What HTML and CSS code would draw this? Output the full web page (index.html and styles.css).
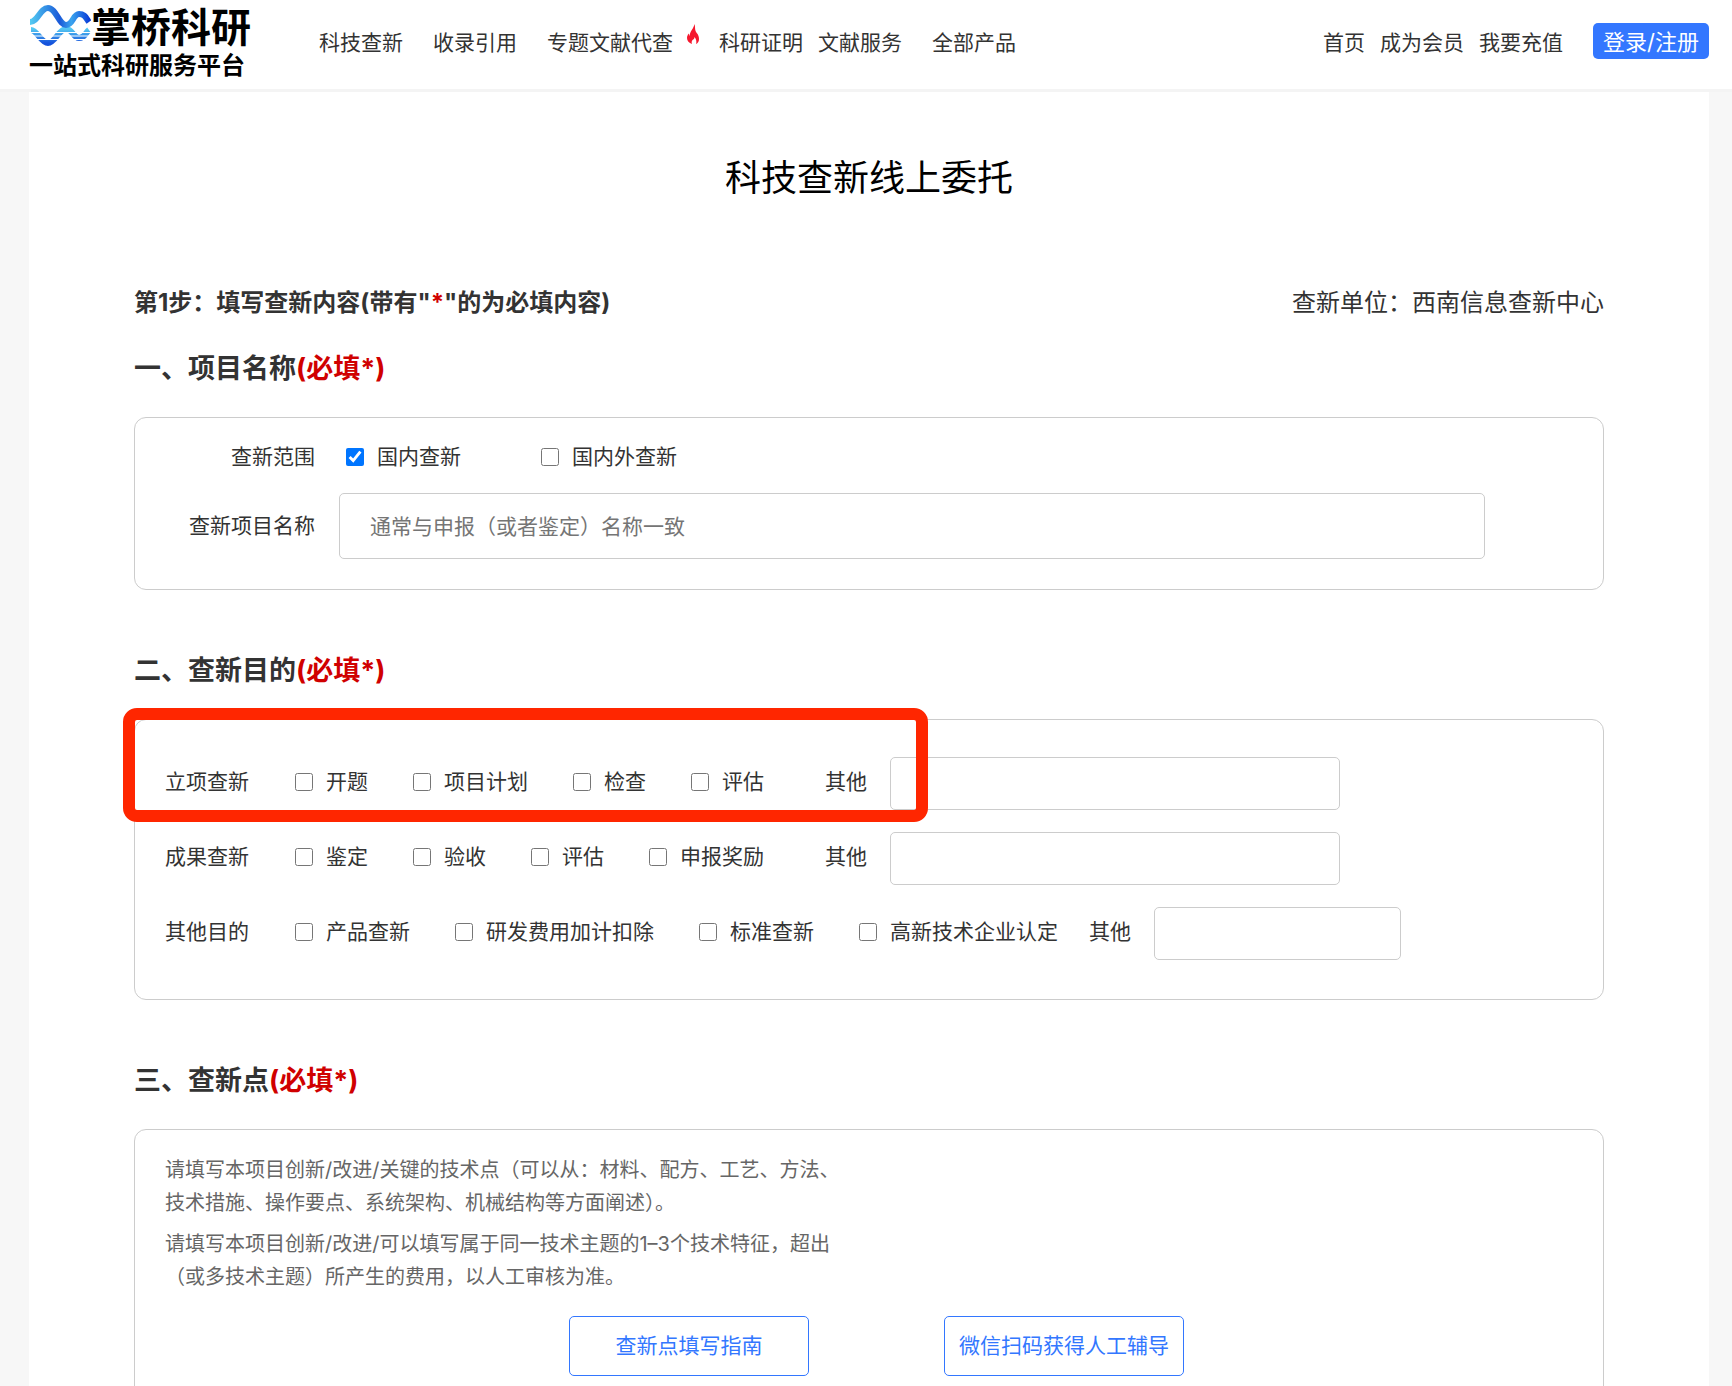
FILE: index.html
```html
<!DOCTYPE html>
<html lang="zh-CN">
<head>
<meta charset="utf-8">
<meta name="viewport" content="width=device-width, initial-scale=1">
<title>科技查新线上委托</title>
<link rel="stylesheet" href="styles.css">
</head>
<body>
<header class="header">
  <a class="logo" href="#">
    <span class="logo-top">
      <svg class="logo-mark" viewBox="0 0 62 46" aria-hidden="true">
        <defs>
          <linearGradient id="wave-a" x1="0" y1="0" x2="1" y2="0">
            <stop offset="0" stop-color="#55ccf2"/><stop offset=".35" stop-color="#2a7de0"/><stop offset=".5" stop-color="#1a58d8"/><stop offset=".7" stop-color="#3aa4ee"/><stop offset="1" stop-color="#0a3fd8"/>
          </linearGradient>
          <linearGradient id="wave-b" x1="0" y1="0" x2="0" y2="1">
            <stop offset="0" stop-color="#55c8f2"/><stop offset="1" stop-color="#1552dc"/>
          </linearGradient>
        </defs>
        <path d="M2 26C8 26 12 39 19 39S30 25 37 25S44 34 50 34S56 29 60 26" fill="none" stroke="url(#wave-b)" stroke-width="6"/>
        <path d="M0 28.500H62M0 32H62M0 35.500H62" stroke="#fff" stroke-width="1.200"/>
        <path d="M1 18C9 18 11 4 19 4S30 21 37 21S44 10 50 10S57 14 60 18" fill="none" stroke="url(#wave-a)" stroke-width="6"/>
      </svg>
      <span class="logo-name">掌桥科研</span>
    </span>
    <span class="logo-tagline">一站式科研服务平台</span>
  </a>
  <nav class="nav" aria-label="主导航">
    <a href="#">科技查新</a>
    <a href="#">收录引用</a>
    <a class="hot" href="#">专题文献代查
      <svg class="flame" viewBox="0 0 12 20" aria-hidden="true"><path d="M7.500 0C8.500 3 7.500 5 9 8C10 9.500 12 11 12 15C12 17.500 11 19 9 20C10 17.500 9 15 7.500 13C7.500 15 6.500 15 5.500 16C4.500 17 4.500 19 5 20C2 19 0 17 0 14C0 12 1 10.500 1.500 9.500L2.500 12C3 7 6.500 5 7.500 0Z" fill="#f5172d"/></svg>
    </a>
    <a class="tight" href="#">科研证明</a>
    <a href="#">文献服务</a>
    <a href="#">全部产品</a>
  </nav>
  <div class="account">
    <a href="#">首页</a>
    <a href="#">成为会员</a>
    <a href="#">我要充值</a>
    <button class="login" type="button">登录/注册</button>
  </div>
</header>

<main class="page">
  <h1 class="title">科技查新线上委托</h1>
  <form>
    <div class="step">
      <strong>第1步：填写查新内容(带有"<span class="required">*</span>"的为必填内容)</strong>
      <span>查新单位：西南信息查新中心</span>
    </div>

    <section class="section">
      <h2 class="heading">一、项目名称<span class="required">(必填*)</span></h2>
      <div class="card card-name">
        <div class="field">
          <span class="field-label">查新范围</span>
          <div class="scope">
            <label class="option"><input type="checkbox" checked>国内查新</label>
            <label class="option"><input type="checkbox">国内外查新</label>
          </div>
        </div>
        <div class="field">
          <label class="field-label" for="project">查新项目名称</label>
          <input class="text-input project" id="project" type="text" placeholder="通常与申报（或者鉴定）名称一致">
        </div>
      </div>
    </section>

    <section class="section">
      <h2 class="heading">二、查新目的<span class="required">(必填*)</span></h2>
      <div class="card card-purpose">
        <div class="highlight"></div>
        <div class="row">
          <span class="row-label">立项查新</span>
          <div class="options">
            <label class="option"><input type="checkbox">开题</label>
            <label class="option"><input type="checkbox">项目计划</label>
            <label class="option"><input type="checkbox">检查</label>
            <label class="option"><input type="checkbox">评估</label>
          </div>
          <label class="other"><span class="other-label">其他</span><input class="text-input" type="text"></label>
        </div>
        <div class="row">
          <span class="row-label">成果查新</span>
          <div class="options">
            <label class="option"><input type="checkbox">鉴定</label>
            <label class="option"><input type="checkbox">验收</label>
            <label class="option"><input type="checkbox">评估</label>
            <label class="option"><input type="checkbox">申报奖励</label>
          </div>
          <label class="other"><span class="other-label">其他</span><input class="text-input" type="text"></label>
        </div>
        <div class="row">
          <span class="row-label">其他目的</span>
          <div class="options">
            <label class="option"><input type="checkbox">产品查新</label>
            <label class="option"><input type="checkbox">研发费用加计扣除</label>
            <label class="option"><input type="checkbox">标准查新</label>
            <label class="option"><input type="checkbox">高新技术企业认定</label>
          </div>
          <label class="other other-short"><span class="other-label">其他</span><input class="text-input" type="text"></label>
        </div>
      </div>
    </section>

    <section class="section">
      <h2 class="heading">三、查新点<span class="required">(必填*)</span></h2>
      <div class="card card-points">
        <p class="hint">请填写本项目创新/改进/关键的技术点（可以从：材料、配方、工艺、方法、<br>技术措施、操作要点、系统架构、机械结构等方面阐述）。</p>
        <p class="hint">请填写本项目创新/改进/可以填写属于同一技术主题的1–3个技术特征，超出<br>（或多技术主题）所产生的费用，以人工审核为准。</p>
        <div class="actions">
          <button class="outline" type="button">查新点填写指南</button>
          <button class="outline" type="button">微信扫码获得人工辅导</button>
        </div>
      </div>
    </section>
  </form>
</main>
</body>
</html>
```

FILE: styles.css
```css
* {
  box-sizing: border-box;
}

body {
  margin: 0;
  background: #f7f7f7;
  color: #333;
  font: 21px/30px Inter, "Noto Sans CJK SC", sans-serif;
}

input,
button {
  font: inherit;
}

a {
  color: inherit;
  text-decoration: none;
}

.header {
  display: flex;
  align-items: flex-start;
  height: 92px;
  padding: 0 23px 0 29px;
  background: #fff;
  border-bottom: 3px solid #f4f4f4;
  white-space: nowrap;
}

.logo {
  display: flex;
  flex-direction: column;
  padding-top: 3px;
  color: #000;
  font-weight: 700;
}

.logo-top {
  display: flex;
  height: 48px;
}

.logo-mark {
  width: 62px;
  height: 46px;
  margin-top: 1px;
}

.logo-name {
  font-size: 40px;
  line-height: 50px;
}

.logo-tagline {
  font-size: 24px;
  line-height: 30px;
}

.nav {
  display: flex;
  gap: 30px;
  margin: 28px 0 0 68px;
}

.nav .hot {
  display: flex;
  gap: 14px;
}

.flame {
  width: 12px;
  height: 20px;
  margin-top: -4px;
}

.nav .tight {
  margin: 0 -15px 0 -10px;
}

.account {
  display: flex;
  gap: 15px;
  margin: 28px 0 0 auto;
}

.login {
  height: 36px;
  margin: -5px 0 0 15px;
  padding: 1px 10px 0;
  border: 0;
  border-radius: 5px;
  background: #37f;
  color: #fff;
  font-size: 22px;
  line-height: 36px;
}

.page {
  margin: 0 23px 0 29px;
  padding: 61px 105px 40px;
  background: #fff;
}

.title {
  margin: 0 0 82px;
  color: #000;
  font-size: 36px;
  font-weight: 400;
  line-height: 50px;
  text-align: center;
}

.step {
  display: flex;
  justify-content: space-between;
  margin-bottom: 28px;
  font-size: 24px;
  line-height: 36px;
}

.required {
  color: #d00000;
}

.section {
  margin-bottom: 61px;
}

.heading {
  margin: 0 0 28px;
  font-size: 27px;
  font-weight: 700;
  line-height: 40px;
}

.card {
  border: 1px solid #ccc;
  border-radius: 12px;
}

.card-name {
  display: grid;
  gap: 21px;
  padding: 24px 118px 30px 30px;
}

.field {
  display: grid;
  grid-template-columns: 150px 1fr;
  gap: 24px;
  align-items: center;
}

.field-label {
  text-align: right;
}

.scope {
  display: flex;
  gap: 80px;
  padding-left: 7px;
}

.option {
  display: flex;
  align-items: center;
  gap: 13px;
}

.option input {
  width: 18px;
  height: 18px;
  margin: 0;
}

.text-input {
  min-width: 0;
  height: 53px;
  padding: 0 30px;
  border: 1px solid #ccc;
  border-radius: 5px;
  background: #fff;
}

.text-input::placeholder {
  color: #757575;
}

.project {
  height: 66px;
}

.card-purpose {
  position: relative;
  display: grid;
  gap: 22px;
  padding: 37px 30px 39px;
}

.row {
  display: flex;
  align-items: center;
  white-space: nowrap;
}

.row-label,
.options,
.other-label {
  padding-bottom: 4px;
}

.row-label {
  margin-right: 46px;
}

.options {
  display: flex;
  gap: 45px;
}

.other {
  display: flex;
  align-items: center;
  gap: 23px;
  margin-left: 61px;
}

.other .text-input {
  width: 450px;
}

.other-short {
  margin-left: 31px;
}

.other-short .text-input {
  width: 247px;
}

/* Marker frame laid over the first row */
.highlight {
  position: absolute;
  top: -12px;
  left: -12px;
  width: 805px;
  height: 114px;
  border: 12px solid #ff2600;
  border-radius: 14px;
  pointer-events: none;
}

.card-points {
  padding: 24px 30px 60px;
}

.hint {
  margin: 0 0 8px;
  color: #666;
  font-size: 20px;
  line-height: 33px;
}

.actions {
  display: flex;
  gap: 135px;
  padding: 14px 0 0 404px;
}

.outline {
  width: 240px;
  height: 60px;
  padding: 0;
  border: 1px solid #37f;
  border-radius: 5px;
  background: #fff;
  color: #37f;
}
```
